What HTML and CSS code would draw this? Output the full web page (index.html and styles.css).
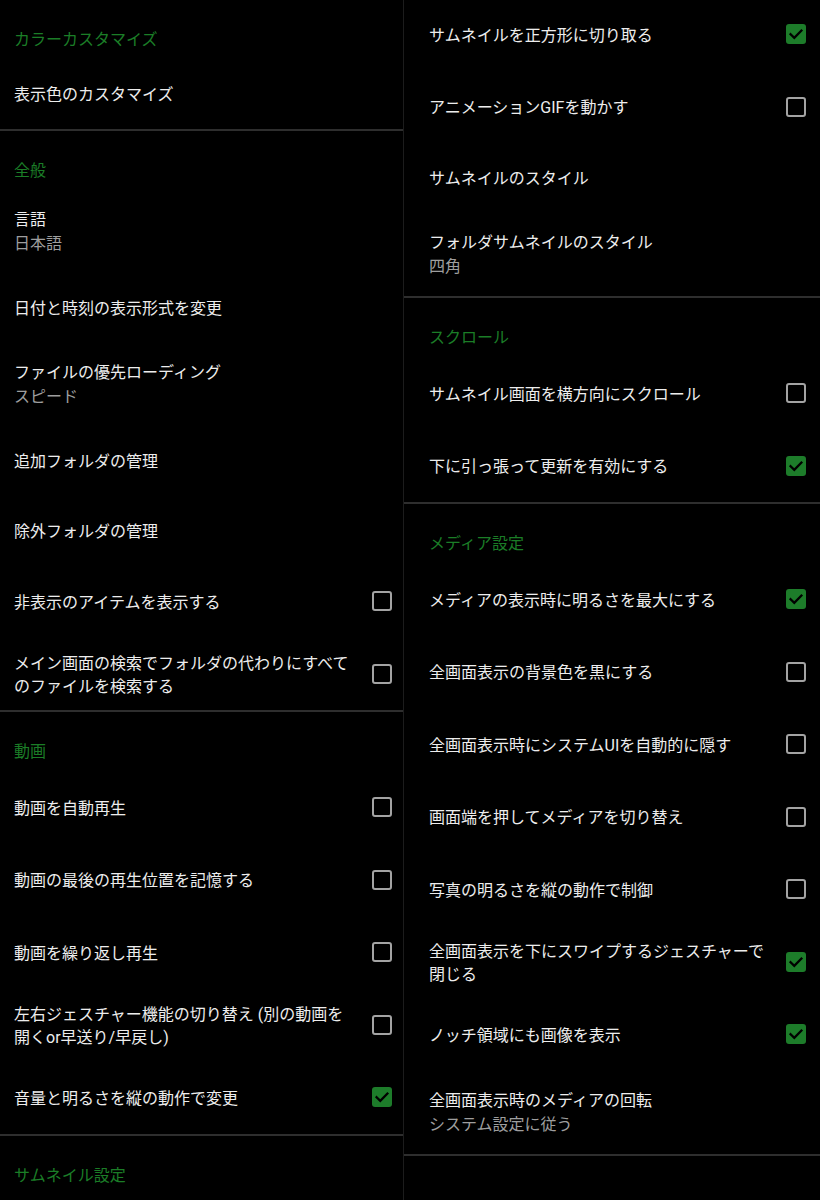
FILE: index.html
```html
<!DOCTYPE html>
<html lang="ja">
<head>
<meta charset="utf-8">
<title>設定</title>
<link rel="stylesheet" href="styles.css">
</head>
<body>
<div class="page">
  <div class="col col-left">
    <div class="cat">カラーカスタマイズ</div>
    <div class="row plain"><div class="text"><div class="title">表示色のカスタマイズ</div></div></div>
    <div class="divider"></div>

    <div class="cat">全般</div>
    <div class="row sum"><div class="text"><div class="title">言語</div><div class="summary">日本語</div></div></div>
    <div class="row plain"><div class="text"><div class="title">日付と時刻の表示形式を変更</div></div></div>
    <div class="row sum"><div class="text"><div class="title">ファイルの優先ローディング</div><div class="summary">スピード</div></div></div>
    <div class="row plain"><div class="text"><div class="title">追加フォルダの管理</div></div></div>
    <div class="row plain"><div class="text"><div class="title">除外フォルダの管理</div></div></div>
    <div class="row check"><div class="text"><div class="title">非表示のアイテムを表示する</div></div><span class="box"></span></div>
    <div class="row check"><div class="text"><div class="title">メイン画面の検索でフォルダの代わりにすべてのファイルを検索する</div></div><span class="box"></span></div>
    <div class="divider"></div>

    <div class="cat">動画</div>
    <div class="row check"><div class="text"><div class="title">動画を自動再生</div></div><span class="box"></span></div>
    <div class="row check"><div class="text"><div class="title">動画の最後の再生位置を記憶する</div></div><span class="box"></span></div>
    <div class="row check"><div class="text"><div class="title">動画を繰り返し再生</div></div><span class="box"></span></div>
    <div class="row check"><div class="text"><div class="title">左右ジェスチャー機能の切り替え (別の動画を開くor早送り/早戻し)</div></div><span class="box"></span></div>
    <div class="row check"><div class="text"><div class="title">音量と明るさを縦の動作で変更</div></div><span class="box on"><svg viewBox="0 0 20 20"><path d="M4.6 10.2 L8.3 13.9 L15.4 6.6"/></svg></span></div>
    <div class="divider"></div>

    <div class="cat">サムネイル設定</div>
  </div>

  <div class="vline"></div>

  <div class="col col-right">
    <div class="row check"><div class="text"><div class="title">サムネイルを正方形に切り取る</div></div><span class="box on"><svg viewBox="0 0 20 20"><path d="M4.6 10.2 L8.3 13.9 L15.4 6.6"/></svg></span></div>
    <div class="row check"><div class="text"><div class="title">アニメーションGIFを動かす</div></div><span class="box"></span></div>
    <div class="row plain"><div class="text"><div class="title">サムネイルのスタイル</div></div></div>
    <div class="row sum"><div class="text"><div class="title">フォルダサムネイルのスタイル</div><div class="summary">四角</div></div></div>
    <div class="divider"></div>

    <div class="cat">スクロール</div>
    <div class="row check"><div class="text"><div class="title">サムネイル画面を横方向にスクロール</div></div><span class="box"></span></div>
    <div class="row check"><div class="text"><div class="title">下に引っ張って更新を有効にする</div></div><span class="box on"><svg viewBox="0 0 20 20"><path d="M4.6 10.2 L8.3 13.9 L15.4 6.6"/></svg></span></div>
    <div class="divider"></div>

    <div class="cat">メディア設定</div>
    <div class="row check"><div class="text"><div class="title">メディアの表示時に明るさを最大にする</div></div><span class="box on"><svg viewBox="0 0 20 20"><path d="M4.6 10.2 L8.3 13.9 L15.4 6.6"/></svg></span></div>
    <div class="row check"><div class="text"><div class="title">全画面表示の背景色を黒にする</div></div><span class="box"></span></div>
    <div class="row check"><div class="text"><div class="title">全画面表示時にシステムUIを自動的に隠す</div></div><span class="box"></span></div>
    <div class="row check"><div class="text"><div class="title">画面端を押してメディアを切り替え</div></div><span class="box"></span></div>
    <div class="row check"><div class="text"><div class="title">写真の明るさを縦の動作で制御</div></div><span class="box"></span></div>
    <div class="row check"><div class="text"><div class="title">全画面表示を下にスワイプするジェスチャーで閉じる</div></div><span class="box on"><svg viewBox="0 0 20 20"><path d="M4.6 10.2 L8.3 13.9 L15.4 6.6"/></svg></span></div>
    <div class="row check"><div class="text"><div class="title">ノッチ領域にも画像を表示</div></div><span class="box on"><svg viewBox="0 0 20 20"><path d="M4.6 10.2 L8.3 13.9 L15.4 6.6"/></svg></span></div>
    <div class="row sum"><div class="text"><div class="title">全画面表示時のメディアの回転</div><div class="summary">システム設定に従う</div></div></div>
    <div class="divider"></div>
  </div>
</div>
</body>
</html>
```

FILE: styles.css
```css
html, body {
  margin: 0;
  padding: 0;
  background: #000;
}
body {
  width: 820px;
  height: 1200px;
  overflow: hidden;
  font-family: Roboto, "Noto Sans CJK JP", sans-serif;
  font-size: 16px;
  color: #ededed;
}
.page {
  display: flex;
  align-items: flex-start;
  height: 1200px;
}
.col {
  display: flex;
  flex-direction: column;
}
.col-left {
  width: 403px;
}
.col-right {
  flex: 1;
  margin-top: -2px;
}
.vline {
  width: 1px;
  align-self: stretch;
  background: #1c1c1c;
}
.cat {
  box-sizing: border-box;
  height: 59px;
  padding-top: 28px;
  line-height: 24px;
  color: #1b7d27;
}
.col-left .cat { padding-left: 14px; }
.col-right .cat { padding-left: 25px; }
.divider {
  height: 2px;
  background: #2e2e2e;
}
.row {
  box-sizing: border-box;
  display: flex;
  align-items: center;
  gap: 16px;
}
.col-left .row { padding: 0 11px 0 14px; }
.col-right .row { padding: 0 14px 0 25px; }
.row.plain { height: 69.5px; }
.row.check { height: 72.5px; }
.row.sum { height: 83.5px; }
.text {
  flex: 1;
  min-width: 0;
  padding-top: 2px;
}
.title {
  line-height: 23px;
  color: #ededed;
}
.row.sum .title { line-height: 24px; }
.summary {
  line-height: 24px;
  color: #9e9e9e;
}
.box {
  box-sizing: border-box;
  width: 20px;
  height: 20px;
  flex: none;
  border: 2px solid #a3a3a3;
  border-radius: 3px;
}
.box.on {
  border: none;
  background: #1d7c2a;
  display: flex;
}
.box svg {
  width: 20px;
  height: 20px;
}
.box svg path {
  fill: none;
  stroke: #000;
  stroke-width: 2.3;
  stroke-linecap: square;
}
```
